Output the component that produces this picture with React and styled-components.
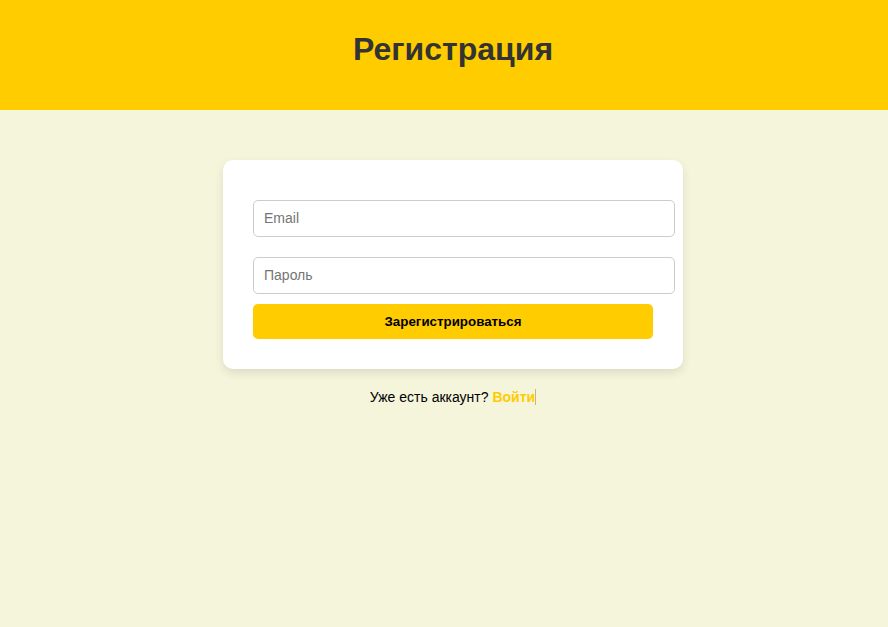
import React from "react";
import styled, { createGlobalStyle } from "styled-components";

const GlobalStyle = createGlobalStyle`
  html, body {
    margin: 0;
    padding: 0;
    background: #f5f5dc;
    font-family: "Liberation Sans", Arial, sans-serif;
    overflow: hidden;
  }
`;

const Header = styled.header`
  background: #ffcc00;
  height: 110px;
  padding: 31px 0 0 18px;
  box-sizing: border-box;
  text-align: center;
`;

const Title = styled.h1`
  margin: 0;
  font-size: 32px;
  line-height: 37px;
  font-weight: bold;
  color: #333;
`;

const Main = styled.main`
  display: flex;
  flex-direction: column;
  align-items: center;
  padding: 50px 0 0 18px;
`;

const Card = styled.form`
  width: 400px;
  padding: 30px;
  background: #fff;
  border-radius: 10px;
  box-shadow: 0 4px 10px rgba(0, 0, 0, 0.1);
`;

const Input = styled.input`
  display: block;
  width: 100%;
  margin: 10px 0 20px;
  padding: 10px;
  font-family: "Liberation Sans", Arial, sans-serif;
  font-size: 14px;
  line-height: 15px;
  border: 1px solid #ccc;
  border-radius: 5px;
  outline: none;

  &:last-of-type {
    margin-bottom: 10px;
  }

  &::placeholder {
    color: #757575;
  }
`;

const Button = styled.button`
  display: block;
  width: 100%;
  height: 35px;
  border: none;
  border-radius: 5px;
  background: #ffcc00;
  color: #000;
  font-family: "Liberation Sans", Arial, sans-serif;
  font-size: 13.33px;
  font-weight: bold;
  cursor: pointer;
`;

const Footer = styled.p`
  margin: 19px 0 0;
  font-size: 14px;
  line-height: 18px;
  color: #000;
`;

const Link = styled.a`
  color: #ffcc00;
  font-weight: bold;
  text-decoration: none;
  border-right: 1px solid #c8b96e;
`;

export default function App() {
  return (
    <>
      <GlobalStyle />
      <Header>
        <Title>Регистрация</Title>
      </Header>
      <Main>
        <Card onSubmit={(e) => e.preventDefault()}>
          <Input type="email" placeholder="Email" />
          <Input type="password" placeholder="Пароль" />
          <Button type="submit">Зарегистрироваться</Button>
        </Card>
        <Footer>
          Уже есть аккаунт? <Link href="#">Войти</Link>
        </Footer>
      </Main>
    </>
  );
}
